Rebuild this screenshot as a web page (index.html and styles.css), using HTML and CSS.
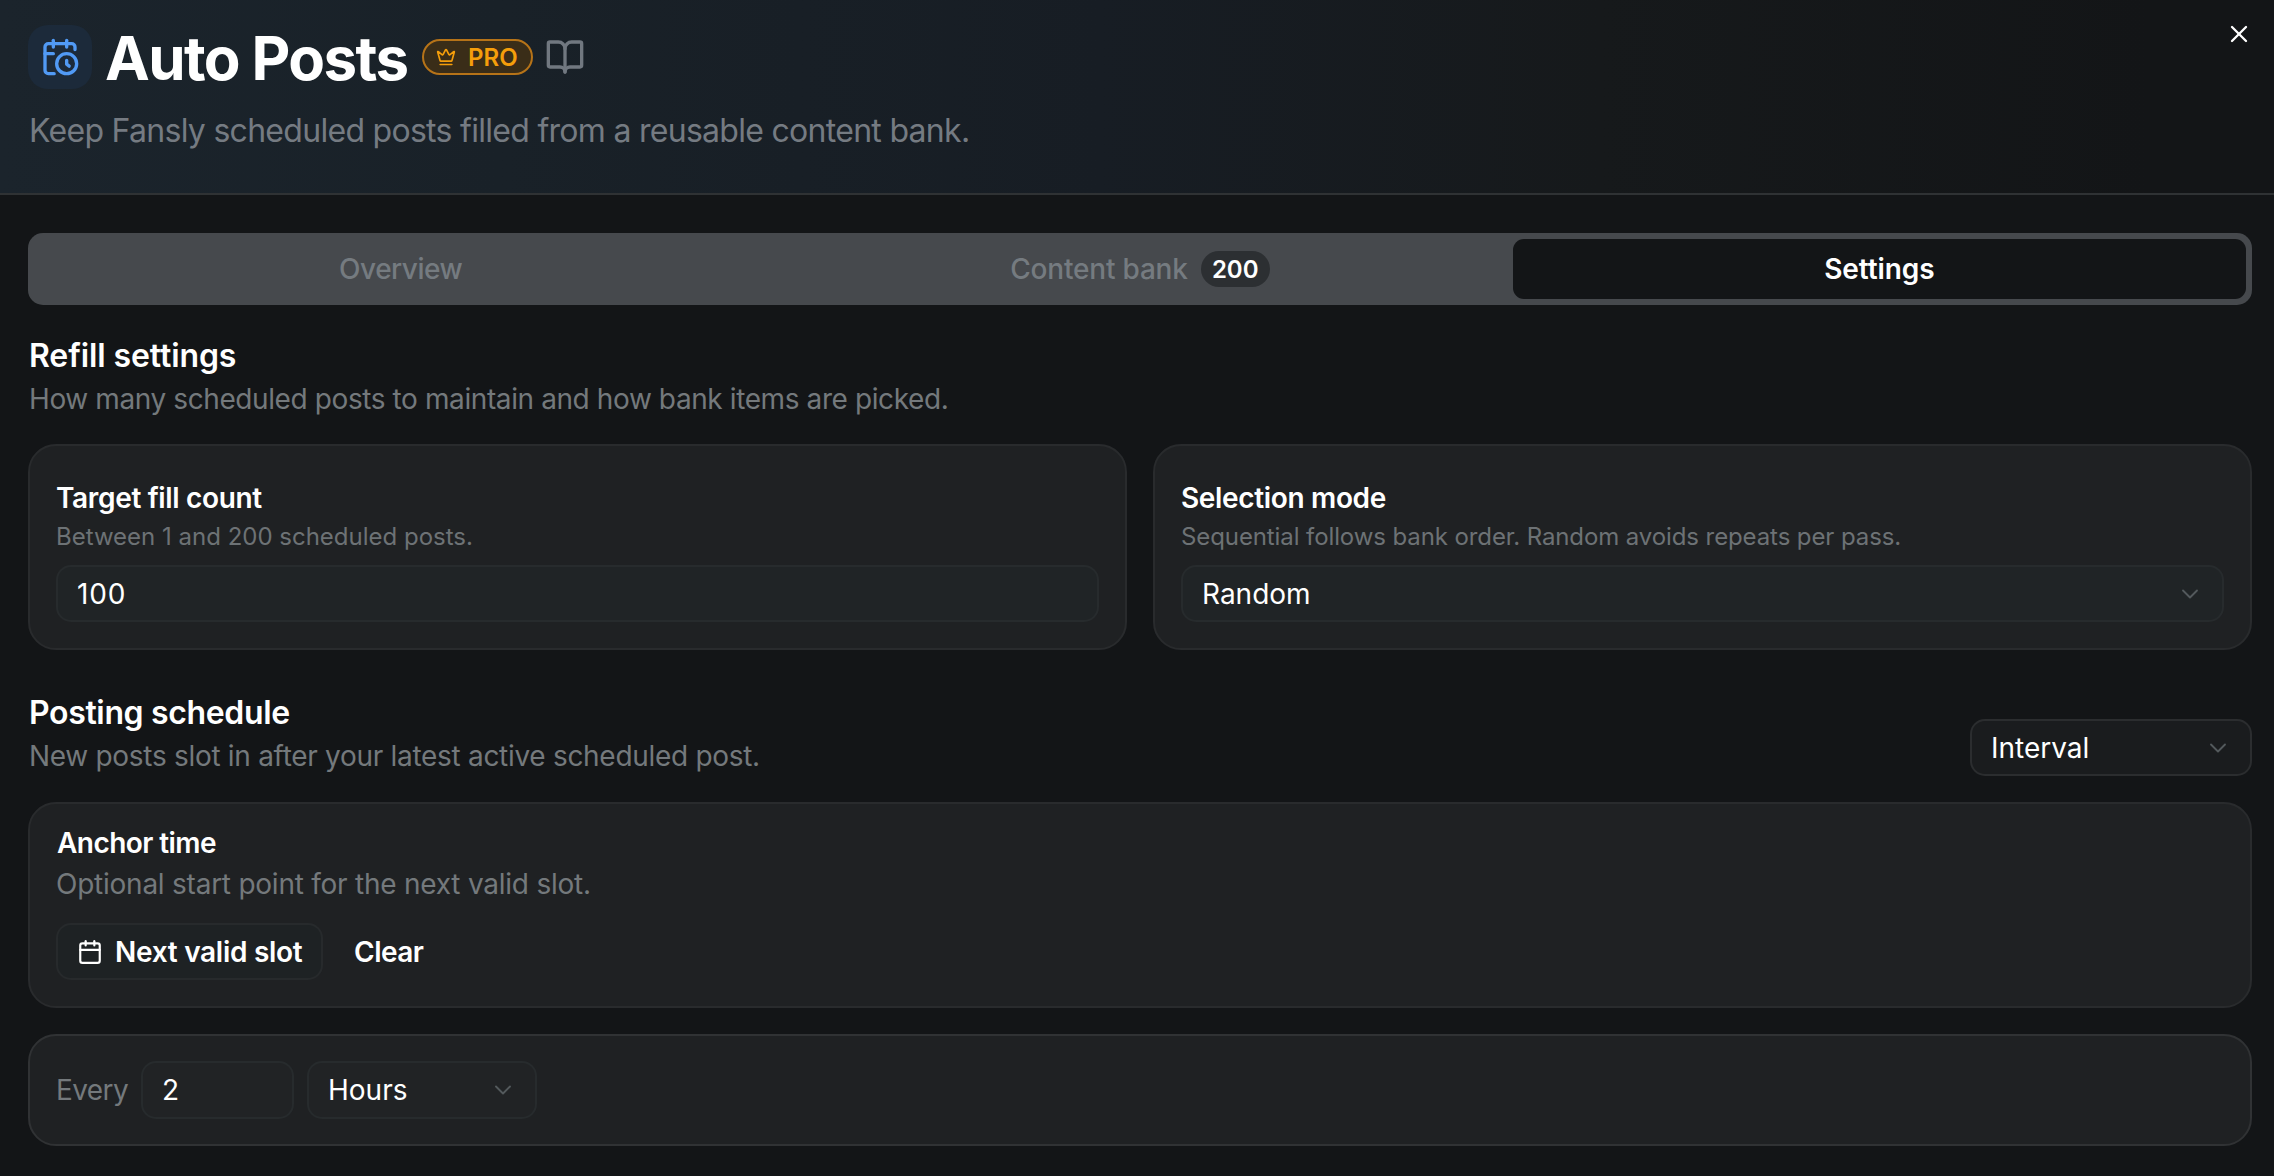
FILE: index.html
```
<!DOCTYPE html>
<html lang="en">
<head>
<meta charset="utf-8">
<title>Auto Posts</title>
<link rel="stylesheet" href="styles.css">
</head>
<body>
<main class="dialog">
  <header class="header">
    <div class="title-row">
      <span class="app-icon">
        <svg class="icon" width="40" height="40" viewBox="0 0 24 24"><path d="M21 7.5V6a2 2 0 0 0-2-2H5a2 2 0 0 0-2 2v14a2 2 0 0 0 2 2h3.5"/><path d="M16 2v4"/><path d="M8 2v4"/><path d="M3 10h5"/><path d="M17.5 17.5 16 16.3V14"/><circle cx="16" cy="16" r="6"/></svg>
      </span>
      <h1 class="title">Auto Posts</h1>
      <span class="pro">
        <svg class="icon" width="20" height="20" viewBox="0 0 24 24"><path d="M11.562 3.266a.5.5 0 0 1 .876 0L15.39 8.87a1 1 0 0 0 1.516.294L21.183 5.5a.5.5 0 0 1 .798.519l-2.834 10.246a1 1 0 0 1-.956.734H5.81a1 1 0 0 1-.957-.734L2.02 6.02a.5.5 0 0 1 .798-.519l4.276 3.664a1 1 0 0 0 1.516-.294z"/><path d="M5 21h14"/></svg>
        PRO
      </span>
      <svg class="icon book" width="40" height="40" viewBox="0 0 24 24"><path d="M12 7v14"/><path d="M3 18a1 1 0 0 1-1-1V4a1 1 0 0 1 1-1h5a4 4 0 0 1 4 4 4 4 0 0 1 4-4h5a1 1 0 0 1 1 1v13a1 1 0 0 1-1 1h-6a3 3 0 0 0-3 3 3 3 0 0 0-3-3z"/></svg>
    </div>
    <p class="subtitle">Keep Fansly scheduled posts filled from a reusable content bank.</p>
    <button class="close" aria-label="Close"><svg class="icon" width="28" height="28" viewBox="0 0 24 24"><path d="M18 6 6 18"/><path d="m6 6 12 12"/></svg></button>
  </header>

  <div class="body">
    <nav class="tabs">
      <button class="tab tab-overview">Overview</button>
      <button class="tab">Content bank <span class="count">200</span></button>
      <button class="tab active">Settings</button>
    </nav>

    <section class="section">
      <h2 class="heading heading-refill">Refill settings</h2>
      <p class="description description-refill">How many scheduled posts to maintain and how bank items are picked.</p>
      <div class="cards">
        <div class="card field">
          <h3 class="label">Target fill count</h3>
          <p class="hint">Between 1 and 200 scheduled posts.</p>
          <div class="control number">100</div>
        </div>
        <div class="card field">
          <h3 class="label">Selection mode</h3>
          <p class="hint hint-mode">Sequential follows bank order. Random avoids repeats per pass.</p>
          <div class="control">Random <svg class="icon chevron" width="28" height="28" viewBox="0 0 24 24"><path d="m6 9 6 6 6-6"/></svg></div>
        </div>
      </div>
    </section>

    <section class="section schedule">
      <div class="schedule-head">
        <div>
          <h2 class="heading heading-posting">Posting schedule</h2>
          <p class="description description-posting">New posts slot in after your latest active scheduled post.</p>
        </div>
        <div class="control interval">Interval <svg class="icon chevron" width="28" height="28" viewBox="0 0 24 24"><path d="m6 9 6 6 6-6"/></svg></div>
      </div>
      <div class="card anchor">
        <h3 class="label label-anchor">Anchor time</h3>
        <p class="description">Optional start point for the next valid slot.</p>
        <div class="actions">
          <button class="slot"><svg class="icon" width="26" height="26" viewBox="0 0 24 24"><path d="M8 2v4"/><path d="M16 2v4"/><rect width="18" height="18" x="3" y="4" rx="2"/><path d="M3 10h18"/></svg>Next valid slot</button>
          <button class="clear">Clear</button>
        </div>
      </div>
      <div class="card every">
        <span class="every-label">Every</span>
        <div class="control amount">2</div>
        <div class="control unit">Hours <svg class="icon chevron" width="28" height="28" viewBox="0 0 24 24"><path d="m6 9 6 6 6-6"/></svg></div>
      </div>
    </section>
  </div>
</main>
</body>
</html>
```
FILE: styles.css
```
* {
  box-sizing: border-box;
}

body {
  margin: 0;
  background: #131517;
  color: #fff;
  font-family: Inter, "Liberation Sans", sans-serif;
  font-size: 28px;
}

h1, h2, h3, p {
  margin: 0;
}

button {
  padding: 0;
  border: 0;
  background: none;
  color: inherit;
  font: inherit;
}

.icon {
  display: block;
  flex: none;
  fill: none;
  stroke: currentColor;
  stroke-width: 2;
  stroke-linecap: round;
  stroke-linejoin: round;
}

.dialog {
  min-height: 1176px;
}

/* Header */
.header {
  position: relative;
  height: 195px;
  padding: 25px 28px 0;
  border-bottom: 2px solid #2f3234;
  background: linear-gradient(to right, #1b242c 0, #192128 500px, #171d24 1100px, #16191b 1600px, #131517 2150px);
}

.title-row {
  display: flex;
  align-items: center;
  height: 64px;
}

.app-icon {
  display: grid;
  place-items: center;
  width: 64px;
  height: 64px;
  border-radius: 20px;
  background: #1c2a3a;
  color: #519af5;
}

.title {
  width: 317px;
  padding: 1px 0 0 13px;
  font-size: 60px;
  font-weight: 700;
  line-height: 64px;
  letter-spacing: -1.6px;
  white-space: nowrap;
}

.pro {
  display: flex;
  align-items: center;
  gap: 12px;
  width: 111px;
  height: 36px;
  margin-left: 13px;
  padding-left: 12px;
  border: 2px solid #b67318;
  border-radius: 19px;
  background: #3a2d18;
  color: #f59e0b;
  font-size: 24px;
  font-weight: 600;
}

.book {
  margin-left: 12px;
  color: #717880;
}

.subtitle {
  margin: 22px 0 0 1px;
  color: #757b82;
  font-size: 32px;
  line-height: 40px;
  letter-spacing: -0.71px;
}

.close {
  position: absolute;
  top: 20px;
  right: 21px;
}

/* Tabs */
.body {
  padding: 38px 22px 0 28px;
}

.tabs {
  display: grid;
  grid-template-columns: repeat(3, 1fr);
  gap: 6px;
  height: 72px;
  padding: 6px;
  border-radius: 15px;
  background: #46494d;
}

.tab {
  display: flex;
  align-items: center;
  justify-content: center;
  gap: 13px;
  border-radius: 11px;
  color: #757b80;
  font-weight: 500;
  letter-spacing: -0.2px;
}

.tab-overview {
  letter-spacing: -0.5px;
}

.tab.active {
  background: #131517;
  color: #fff;
  font-weight: 600;
  letter-spacing: -0.1px;
}

.count {
  display: grid;
  place-items: center;
  width: 69px;
  height: 36px;
  border-radius: 18px;
  background: #2c2f32;
  color: #fff;
  font-size: 24px;
  font-weight: 600;
  letter-spacing: 0;
}

/* Sections */
.section {
  padding-top: 31px;
}

.schedule {
  padding-top: 43px;
}

.heading {
  padding-left: 1px;
  font-size: 32px;
  font-weight: 600;
  line-height: 40px;
  letter-spacing: -0.1px;
}

.heading-posting {
  letter-spacing: -0.35px;
}

.description {
  margin-top: 3px;
  color: #74797c;
  line-height: 40px;
  letter-spacing: -0.24px;
}

.description-refill {
  padding-left: 1px;
  letter-spacing: -0.4px;
}

.description-posting {
  padding-left: 1px;
  letter-spacing: -0.3px;
}

.card {
  border: 2px solid #292b2d;
  border-radius: 28px;
  background: #1f2123;
}

.cards {
  display: grid;
  grid-template-columns: 1fr 1fr;
  gap: 26px;
  margin-top: 25px;
}

.field {
  height: 206px;
  padding: 34px 26px 0;
}

.label {
  font-size: 28px;
  font-weight: 600;
  line-height: 36px;
  letter-spacing: -0.34px;
}

.hint {
  margin: 5px 0 12px;
  color: #6d7275;
  font-size: 24px;
  line-height: 32px;
}

.hint-mode {
  letter-spacing: -0.1px;
}

.control {
  display: flex;
  align-items: center;
  justify-content: space-between;
  height: 57px;
  padding: 0 18px 0 19px;
  border: 2px solid #272b2d;
  border-radius: 15px;
  background: #202426;
}

.number {
  letter-spacing: 0.8px;
}

.chevron {
  color: #53595c;
  stroke-width: 1.6;
}

/* Schedule */
.schedule-head {
  display: flex;
  align-items: flex-end;
  justify-content: space-between;
  margin-bottom: 26px;
}

.interval {
  width: 282px;
  border-color: #2b2d2f;
  background: #1a1c1e;
}

.anchor {
  height: 206px;
  margin-bottom: 26px;
  padding: 21px 26px 0;
}

.label-anchor {
  padding-left: 1px;
  letter-spacing: -0.56px;
}

.actions {
  display: flex;
  align-items: center;
  gap: 31px;
  margin-top: 19px;
  font-weight: 600;
}

.slot {
  display: flex;
  align-items: center;
  gap: 12px;
  width: 267px;
  height: 57px;
  padding-left: 19px;
  border: 2px solid #272a2c;
  border-radius: 15px;
  background: #1e2224;
  letter-spacing: -0.28px;
}

.clear {
  letter-spacing: -0.5px;
}

.every {
  display: flex;
  align-items: center;
  height: 112px;
  padding: 0 26px;
  border-color: #303234;
}

.every-label {
  width: 85px;
  color: #74797c;
  letter-spacing: -0.58px;
}

.amount {
  width: 153px;
  height: 58px;
  margin-right: 13px;
  background: #212325;
}

.unit {
  width: 230px;
  height: 58px;
  background: #212325;
}
```
